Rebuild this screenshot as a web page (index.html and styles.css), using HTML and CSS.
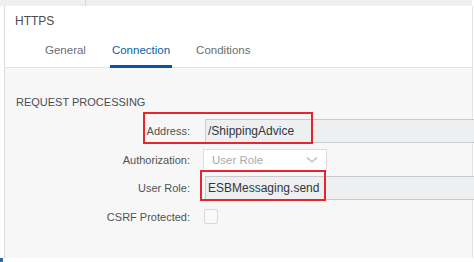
FILE: index.html
```html
<!DOCTYPE html>
<html lang="en">
<head>
    <meta charset="UTF-8">
    <title>HTTPS</title>
    <link rel="stylesheet" href="styles.css">
</head>
<body>
    <div class="topbar"><span class="topbar-split"></span></div>

    <div class="panel">
        <div class="panel-head">
            <div class="title">HTTPS</div>
            <div class="tabs">
                <div class="tab">General</div>
                <div class="tab active">Connection</div>
                <div class="tab">Conditions</div>
            </div>
        </div>

        <div class="panel-body">
            <div class="section-title">REQUEST PROCESSING</div>

            <div class="form">
                <label class="label">Address:</label>
                <div class="field readonly">/ShippingAdvice</div>

                <label class="label">Authorization:</label>
                <div class="select">
                    <span>User Role</span>
                    <svg width="12" height="8" viewBox="0 0 12 8"><path d="M1 1.5 L6 6 L11 1.5" fill="none" stroke="#b5b7b9" stroke-width="1.2"/></svg>
                </div>

                <label class="label">User Role:</label>
                <div class="field readonly">ESBMessaging.send</div>

                <label class="label">CSRF Protected:</label>
                <div><span class="checkbox"></span></div>
            </div>

            <!-- annotation boxes -->
            <div class="mark mark-address"></div>
            <div class="mark mark-role"></div>
        </div>
    </div>
    <div class="foot"><span class="foot-dot"></span></div>
</body>
</html>
```

FILE: styles.css
```css
body {
    margin: 0;
    font-family: "Liberation Sans", Arial, sans-serif;
    color: #32363a;
    background-color: #ffffff;
    width: 474px;
    height: 262px;
    overflow: hidden;
}

.topbar {
    height: 6px;
    background-color: #efefef;
    margin-right: 2px;
    position: relative;
}

.topbar-split {
    position: absolute;
    left: 85px;
    top: 0;
    width: 1px;
    height: 6px;
    background-color: #d6d6d6;
}

.panel {
    margin-left: 4px;
    margin-right: 1px;
    border-left: 1px solid #dcdcdc;
    border-right: 1px solid #e4e4e4;
    height: 252px;
    display: flex;
    flex-direction: column;
}

.panel-head {
    background-color: #ffffff;
}

.title {
    font-size: 12px;
    padding: 8px 0 0 10px;
    height: 20px;
    color: #4a4d50;
}

.tabs {
    display: flex;
    gap: 22px;
    padding-left: 38px;
    border-bottom: 1px solid #e2e2e2;
    height: 34px;
    box-sizing: border-box;
}

.tab {
    font-size: 11.5px;
    color: #6a6d70;
    padding: 9px 2px 0;
    border-bottom: 3px solid transparent;
    height: 34px;
    line-height: 15px;
    box-sizing: border-box;
}

.tab.active {
    color: #0a5fa8;
    border-bottom-color: #0854a0;
}

.panel-body {
    flex: 1;
    background-color: #f7f7f7;
    position: relative;
}

.section-title {
    font-size: 11px;
    color: #4a4d50;
    padding: 28px 0 0 11px;
    height: 22px;
}

.form {
    display: grid;
    grid-template-columns: 185px 1fr;
    grid-auto-rows: 26px;
    column-gap: 15px;
    row-gap: 2.5px;
    align-items: center;
    margin-right: -4px;
}

.label {
    font-size: 11px;
    color: #505356;
    text-align: right;
}

.field {
    height: 24px;
    box-sizing: border-box;
    font-size: 12px;
    line-height: 22px;
    padding-left: 2px;
    color: #32363a;
}

.readonly {
    background-color: #eeeff1;
    border: 1px solid #c9cbcd;
    border-right: none;
}

.select {
    width: 124px;
    height: 22px;
    margin-left: -2px;
    box-sizing: border-box;
    background-color: #ffffff;
    border: 1px solid #dcdcdc;
    display: flex;
    align-items: center;
    justify-content: space-between;
    padding: 0 8px 0 8px;
    font-size: 11.5px;
    color: #a9abad;
}

.checkbox {
    display: block;
    width: 12px;
    height: 13px;
    margin-left: -1px;
    border: 1px solid #d8d8d8;
    border-radius: 2px;
    background-color: #f9f9f9;
}

.mark {
    position: absolute;
    border: 2px solid #e3262f;
    box-sizing: border-box;
}

.mark-address {
    left: 138px;
    top: 44px;
    width: 170px;
    height: 32px;
}

.mark-role {
    left: 195px;
    top: 102px;
    width: 126px;
    height: 31px;
}

.foot {
    height: 4px;
    position: relative;
}

.foot-dot {
    position: absolute;
    left: 0;
    top: 0;
    width: 3px;
    height: 4px;
    background-color: #2a6aa8;
}
```
